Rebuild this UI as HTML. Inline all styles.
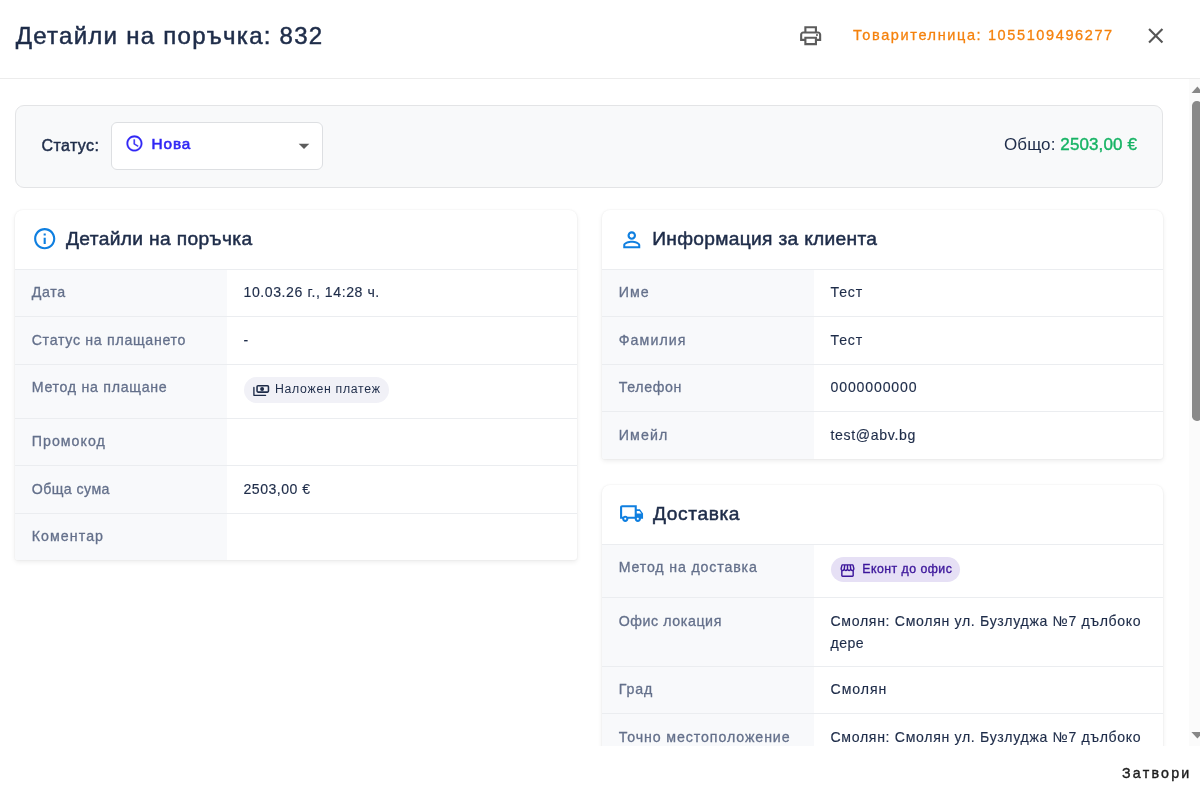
<!DOCTYPE html>
<html lang="bg">
<head>
<meta charset="utf-8">
<title>Детайли на поръчка</title>
<style>
*{box-sizing:border-box;margin:0;padding:0}
html,body{width:1200px;height:797px;overflow:hidden;background:#fff}
body{font-family:"Liberation Sans",sans-serif;color:#1e2c49;position:relative}
#wrap{position:absolute;left:0;top:0;width:1200px;height:797px;overflow:hidden;will-change:transform;transform:translateZ(0);background:#fff}
.abs{position:absolute}
span.t{position:absolute;white-space:nowrap;display:block}
.hdr{position:absolute;left:0;top:0;width:1200px;height:79px;border-bottom:1px solid #ececec}
#title{left:15.7px;top:19px;font-size:24px;line-height:34px;color:#1e2c49;letter-spacing:.6px;-webkit-text-stroke:.5px #1e2c49}
#awb{left:853px;top:25px;font-size:14.5px;line-height:20px;color:#f5820d;letter-spacing:1.65px;-webkit-text-stroke:.3px #f5820d}
.statusbar{position:absolute;left:15px;top:105px;width:1148px;height:83px;background:#f8f9fa;border:1px solid #e3e4e6;border-radius:9px}
#slabel{left:41.5px;top:136px;font-size:16px;line-height:20px;color:#1e2c49;-webkit-text-stroke:.45px #1e2c49;letter-spacing:.05px}
.select{position:absolute;left:111px;top:122px;width:212px;height:48px;background:#fff;border:1px solid #dddfe2;border-radius:6px}
#sval{left:151.5px;top:134.2px;font-size:15.3px;line-height:20px;color:#3127f5;letter-spacing:.3px;-webkit-text-stroke:.6px #3127f5}
#total{left:1004px;top:135px;font-size:17px;line-height:20px;color:#1e2c49}
#total b{font-weight:400;color:#16b364;-webkit-text-stroke:.4px #16b364}
.card{position:absolute;background:#fff;border-radius:8px 8px 3px 3px;box-shadow:0 2px 5px rgba(0,0,0,.08),0 0 2px rgba(0,0,0,.07);overflow:hidden}
.chead{height:60px;border-bottom:1px solid #ebedf0;position:relative}
.chead span.t{left:51px;top:15.5px;font-size:19.2px;line-height:26px;color:#1e2c49;letter-spacing:.4px;-webkit-text-stroke:.5px #1e2c49}
.chead svg{position:absolute}
.row{position:relative;border-bottom:1px solid #ebedf0}
.row:last-child{border-bottom:0}
.row::before{content:"";position:absolute;left:0;top:0;bottom:0;width:212px;background:#f8f9fb}
.k{left:16.7px;top:11px;color:#64708b;font-size:14.2px;line-height:22px;letter-spacing:.4px;-webkit-text-stroke:.3px #64708b}
.v{left:228.5px;top:11px;color:#1e2c49;font-size:14.1px;line-height:22px;letter-spacing:.3px;-webkit-text-stroke:.15px #1e2c49}
.chip{position:absolute;height:25.5px;border-radius:13px}
.chip span.t{font-size:12.3px;line-height:25px;letter-spacing:.45px;top:0}
.footer{position:absolute;left:0;top:746px;width:1200px;height:51px;background:#fff}
#close{left:1122px;top:763px;font-size:14.2px;line-height:20px;letter-spacing:1.9px;color:#1c1c1c;-webkit-text-stroke:.4px #1c1c1c}
.sb{position:absolute;left:1189px;top:79px;width:11px;height:667px;background:#fbfbfb}
/*LS*/
#title{letter-spacing:1.27px}
#awb{letter-spacing:1.62px}
#slabel{letter-spacing:0.39px}
#sval{letter-spacing:0.95px}
#total{letter-spacing:0.11px}
#h1{letter-spacing:0.36px}
#h2{letter-spacing:0.31px}
#h3{letter-spacing:0.59px}
#k1{letter-spacing:0.66px}
#k2{letter-spacing:0.69px}
#k3{letter-spacing:0.71px}
#k4{letter-spacing:1.05px}
#k5{letter-spacing:0.43px}
#k6{letter-spacing:1.08px}
#v1{letter-spacing:0.57px}
#v5{letter-spacing:0.5px}
#c1{letter-spacing:0.7px}
#k7{letter-spacing:1.1px}
#k8{letter-spacing:1.1px}
#k9{letter-spacing:0.63px}
#k10{letter-spacing:1.15px}
#k11{letter-spacing:0.84px}
#k12{letter-spacing:0.59px}
#k13{letter-spacing:0.85px}
#k14{letter-spacing:0.91px}
#v7{letter-spacing:0.85px}
#v8{letter-spacing:0.85px}
#v9{letter-spacing:0.85px}
#v10{letter-spacing:0.66px}
#c2{letter-spacing:0.48px}
#v12{letter-spacing:0.68px}
#v14{letter-spacing:0.68px}
#v12b{letter-spacing:0.45px}
#v14b{letter-spacing:0.45px}
#v13{letter-spacing:0.95px}
#close{letter-spacing:2.25px}
/*LS*/
</style>
</head>
<body>
<div id="wrap">
<div class="hdr">
  <span class="t" id="title">Детайли на поръчка: 832</span>
  <svg class="abs" style="left:797.7px;top:22.8px" width="25.300" height="25.300" viewBox="0 0 24 24"><path fill="#5c5c5c" d="M19 8h-1V3H6v5H5c-1.66 0-3 1.34-3 3v6h4v4h12v-4h4v-6c0-1.66-1.34-3-3-3zM8 5h8v3H8V5zm8 12v2H8v-4h8v2zm2-2v-2H6v2H4v-4c0-.55.45-1 1-1h14c.55 0 1 .45 1 1v4h-2z"/><circle fill="#5c5c5c" cx="18" cy="11.5" r="1"/></svg>
  <span class="t" id="awb">Товарителница: 1055109496277</span>
  <svg class="abs" style="left:1143.1px;top:22.7px" width="25.500" height="25.500" viewBox="0 0 24 24"><path fill="#555" d="M19 6.41L17.59 5 12 10.59 6.41 5 5 6.41 10.59 12 5 17.59 6.41 19 12 13.41 17.59 19 19 17.59 13.41 12z"/></svg>
</div>

<div class="statusbar"></div>
<span class="t" id="slabel">Статус:</span>
<div class="select"></div>
<svg class="abs" style="left:124.5px;top:133.6px" width="18.900" height="18.900" viewBox="0 0 24 24"><path fill="#3127f5" stroke="#3127f5" stroke-width=".4" d="M11.99 2C6.47 2 2 6.48 2 12s4.47 10 9.99 10C17.52 22 22 17.52 22 12S17.52 2 11.99 2zM12 20c-4.42 0-8-3.58-8-8s3.58-8 8-8 8 3.58 8 8-3.58 8-8 8zm.5-13H11v6l5.25 3.15.75-1.23-4.500-2.670z"/></svg>
<span class="t" id="sval">Нова</span>
<svg class="abs" style="left:296px;top:141px" width="16" height="10" viewBox="0 0 16 10"><path fill="#5c5c5c" d="M2.700 2.800 L13.300 2.800 L8 8.100z"/></svg>
<span class="t" id="total">Общо: <b>2503,00 €</b></span>

<!-- Left card -->
<div class="card" style="left:15px;top:210px;width:562px;height:350px">
  <div class="chead">
    <svg style="left:17.2px;top:16.400px" width="25.400" height="25.400" viewBox="0 0 24 24"><path fill="#0f7fe0" d="M11 7h2v2h-2zm0 4h2v6h-2zm1-9C6.48 2 2 6.480 2 12s4.480 10 10 10 10-4.480 10-10S17.520 2 12 2zm0 18c-4.410 0-8-3.590-8-8s3.590-8 8-8 8 3.590 8 8-3.590 8-8 8z"/></svg>
    <span class="t" id="h1">Детайли на поръчка</span>
  </div>
  <div class="row" style="height:47px"><span class="t k" id="k1">Дата</span><span class="t v" id="v1">10.03.26 г., 14:28 ч.</span></div>
  <div class="row" style="height:48px"><span class="t k" id="k2" style="top:12px">Статус на плащането</span><span class="t v" id="v2" style="top:12px">-</span></div>
  <div class="row" style="height:54px"><span class="t k" id="k3">Метод на плащане</span>
    <div class="chip" style="left:228.7px;top:12.2px;width:145px;background:#f1f1f7">
      <svg class="abs" style="left:0;top:0" width="40" height="25.5" viewBox="0 0 40 25.5" fill="none" stroke="#1e2c49" stroke-width="1.55" stroke-linecap="round" stroke-linejoin="round"><rect x="13.05" y="8.8" width="11.4" height="6.3" rx="1"/><circle cx="18.1" cy="12" r="2" fill="#1e2c49" stroke="none"/><path stroke-width="1.35" d="M9.9 10.4 V18.3 H21.600"/></svg>
      <span class="t" id="c1" style="left:31.300px;color:#1e2c49">Наложен платеж</span>
    </div>
  </div>
  <div class="row" style="height:47px"><span class="t k" id="k4" style="top:10.500px">Промокод</span></div>
  <div class="row" style="height:48px"><span class="t k" id="k5" style="top:11.500px">Обща сума</span><span class="t v" id="v5" style="top:11.500px">2503,00 €</span></div>
  <div class="row" style="height:46px"><span class="t k" id="k6">Коментар</span></div>
</div>

<!-- Right card 1 -->
<div class="card" style="left:602px;top:210px;width:561px;height:249px">
  <div class="chead">
    <svg style="left:16.800px;top:16.700px" width="25.500" height="25.500" viewBox="0 0 24 24"><path fill="#0f7fe0" d="M12,4A4,4 0 0,1 16,8A4,4 0 0,1 12,12A4,4 0 0,1 8,8A4,4 0 0,1 12,4M12,6A2,2 0 0,0 10,8A2,2 0 0,0 12,10A2,2 0 0,0 14,8A2,2 0 0,0 12,6M12,13C14.67,13 20,14.33 20,17V20H4V17C4,14.33 9.33,13 12,13M12,14.9C9.03,14.9 5.9,16.36 5.9,17V18.1H18.1V17C18.1,16.36 14.97,14.9 12,14.9Z"/></svg>
    <span class="t" id="h2" style="left:50.2px">Информация за клиента</span>
  </div>
  <div class="row" style="height:47px"><span class="t k" id="k7">Име</span><span class="t v" id="v7">Тест</span></div>
  <div class="row" style="height:48px"><span class="t k" id="k8" style="top:12px">Фамилия</span><span class="t v" id="v8" style="top:12px">Тест</span></div>
  <div class="row" style="height:47px"><span class="t k" id="k9">Телефон</span><span class="t v" id="v9">0000000000</span></div>
  <div class="row" style="height:47px"><span class="t k" id="k10" style="top:12px">Имейл</span><span class="t v" id="v10" style="top:12px">test@abv.bg</span></div>
</div>

<!-- Right card 2 -->
<div class="card" style="left:602px;top:485px;width:561px;height:300px;border-bottom-left-radius:0;border-bottom-right-radius:0">
  <div class="chead">
    <svg style="left:17px;top:16.1px" width="25.100" height="25.100" viewBox="0 0 24 24"><path fill="#0f7fe0" d="M20 8h-3V4H3c-1.100 0-2 .9-2 2v11h2c0 1.660 1.340 3 3 3s3-1.340 3-3h6c0 1.660 1.340 3 3 3s3-1.340 3-3h2v-5l-3-4zm-.5 1.500l1.960 2.500H17V9.500h2.500zM6 18c-.55 0-1-.45-1-1s.45-1 1-1 1 .45 1 1-.45 1-1 1zm2.220-3c-.55-.61-1.330-1-2.220-1s-1.670.39-2.220 1H3V6h12v9H8.220zM18 18c-.55 0-1-.45-1-1s.45-1 1-1 1 .45 1 1-.45 1-1 1z"/></svg>
    <span class="t" id="h3" style="top:16px">Доставка</span>
  </div>
  <div class="row" style="height:53px"><span class="t k" id="k11">Метод на доставка</span>
    <div class="chip" style="left:228.700px;top:12.300px;width:129.100px;height:25px;background:#e6e0f5">
      <svg class="abs" style="left:8.100px;top:4.400px" width="17" height="17" viewBox="0 0 24 24"><path fill="#3c169b" d="M21.900 8.890l-1.050-4.370c-.22-.9-1-1.520-1.910-1.520H5.050c-.9 0-1.690.63-1.900 1.520L2.100 8.890c-.24 1.020-.02 2.060.62 2.880.8.110.19.190.28.290V19c0 1.100.9 2 2 2h14c1.100 0 2-.9 2-2v-6.940c.09-.9.2-.18.280-.28.640-.82.870-1.870.62-2.890zM18.910 4.990l1.050 4.370c.1.420.01.840-.25 1.170-.14.180-.44.470-.94.470-.61 0-1.140-.49-1.210-1.140L16.980 5l1.930-.01zM13 5h1.960l.54 4.520c.5.390-.7.780-.33 1.070-.22.260-.54.410-.95.410-.67 0-1.220-.59-1.220-1.310V5zM8.490 9.520L9.040 5H11v4.690c0 .72-.55 1.310-1.290 1.310-.34 0-.65-.15-.89-.41-.25-.29-.37-.68-.33-1.070zm-4.450-.16L5.050 5h1.970l-.58 4.860c-.8.650-.6 1.140-1.210 1.140-.49 0-.8-.29-.93-.47-.27-.32-.36-.75-.26-1.170zM5 19v-6.030c.8.010.15.030.23.030.87 0 1.660-.36 2.240-.95.600.6 1.400.95 2.310.95.870 0 1.650-.36 2.230-.93.590.57 1.390.93 2.290.93.840 0 1.640-.35 2.240-.95.580.59 1.370.95 2.240.95.080 0 .15-.2.230-.03V19H5z"/></svg>
      <span class="t" id="c2" style="left:31.600px;color:#3c169b;-webkit-text-stroke:.35px #3c169b">Еконт до офис</span>
    </div>
  </div>
  <div class="row" style="height:69px"><span class="t k" id="k12" style="top:11.5px">Офис локация</span><span class="t v" id="v12" style="top:11.5px">Смолян: Смолян ул. Бузлуджа №7 дълбоко</span><span class="t v" id="v12b" style="top:33.5px">дере</span></div>
  <div class="row" style="height:47px"><span class="t k" id="k13">Град</span><span class="t v" id="v13">Смолян</span></div>
  <div class="row" style="height:69px"><span class="t k" id="k14" style="top:12px">Точно местоположение</span><span class="t v" id="v14" style="top:12px">Смолян: Смолян ул. Бузлуджа №7 дълбоко</span><span class="t v" id="v14b" style="top:34px">дере</span></div>
</div>

<div class="footer"></div>
<span class="t" id="close">Затвори</span>

<!-- scrollbar -->
<div class="sb"></div>
<svg class="abs" style="left:1189px;top:84px" width="11" height="12" viewBox="0 0 11 12"><path fill="#878787" d="M2.600 9 L8.400 2.600 L14.200 9z"/></svg>
<div class="abs" style="left:1192.400px;top:100.700px;width:9.900px;height:320px;background:#8a8a8a;border-radius:4.800px"></div>
<svg class="abs" style="left:1189px;top:729px" width="11" height="12" viewBox="0 0 11 12"><path fill="#878787" d="M2.400 3.100 L14.400 3.100 L8.400 9.600z"/></svg>
</div>
</body>
</html>
